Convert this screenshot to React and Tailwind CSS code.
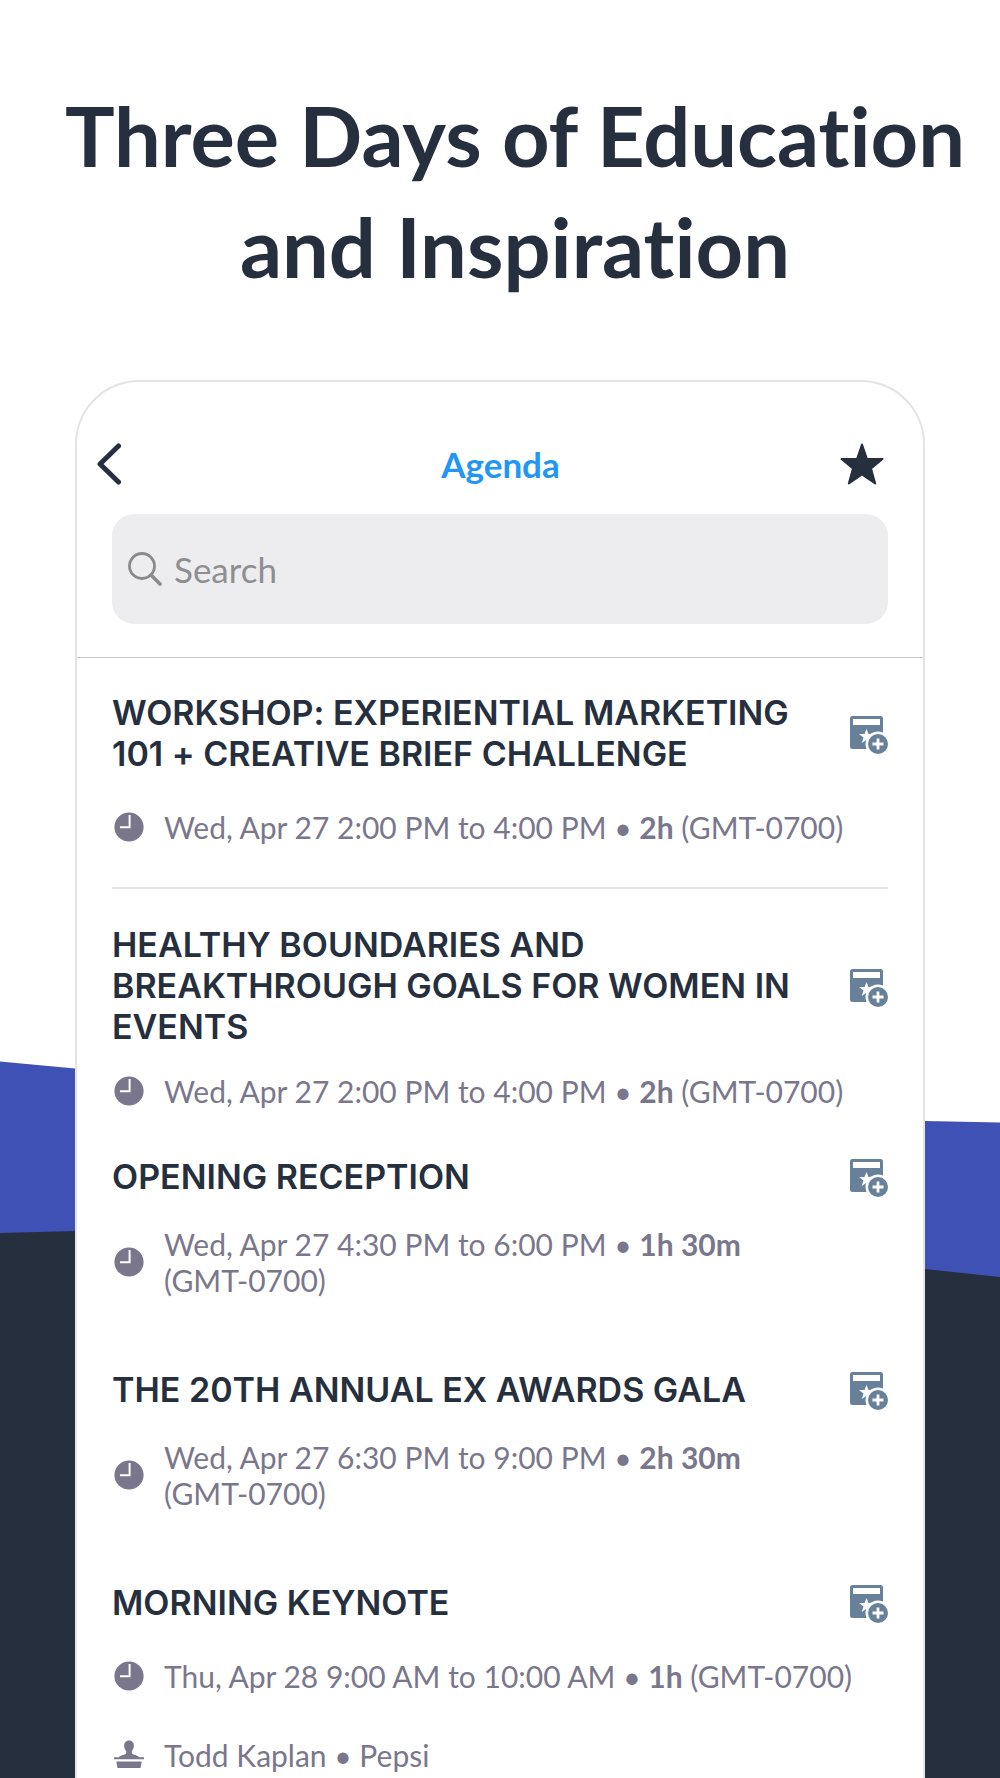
import React from "react";

const sessions = [
  {
    id: 1,
    title: "Workshop: Experiential Marketing 101 + Creative Brief Challenge",
    time: "Wed, Apr 27 2:00 PM to 4:00 PM",
    duration: "2h",
    zone: "(GMT-0700)",
    rowClass: "pt-[34px] pb-[42px] border-b-2 border-[#e4e4e5]",
    metaClass: "mt-[35px]",
  },
  {
    id: 2,
    title: "Healthy Boundaries and Breakthrough Goals for Women in Events",
    time: "Wed, Apr 27 2:00 PM to 4:00 PM",
    duration: "2h",
    zone: "(GMT-0700)",
    rowClass: "pt-[35px] pb-[46px]",
    metaClass: "mt-[26px]",
  },
  {
    id: 3,
    title: "Opening Reception",
    time: "Wed, Apr 27 4:30 PM to 6:00 PM",
    duration: "1h 30m",
    zone: "(GMT-0700)",
    rowClass: "pb-[70px]",
    metaClass: "mt-[29px]",
  },
  {
    id: 4,
    title: "The 20th Annual Ex Awards Gala",
    time: "Wed, Apr 27 6:30 PM to 9:00 PM",
    duration: "2h 30m",
    zone: "(GMT-0700)",
    rowClass: "pb-[70px]",
    metaClass: "mt-[29px]",
  },
  {
    id: 5,
    title: "Morning Keynote",
    time: "Thu, Apr 28 9:00 AM to 10:00 AM",
    duration: "1h",
    zone: "(GMT-0700)",
    speaker: "Todd Kaplan • Pepsi",
    rowClass: "",
    metaClass: "mt-[35px]",
  },
];

const Backdrop = () => (
  <svg
    className="absolute inset-0 w-full h-full"
    viewBox="0 0 1000 1778"
    preserveAspectRatio="none"
    aria-hidden="true"
  >
    <path d="M0 1061.5 L75 1068.5 L500 1112 L925 1121 L1000 1122.5 V1300 H0Z" fill="#4051b5" />
    <path d="M0 1233 L75 1231 L500 1222 L925 1269 L1000 1277 V1778 H0Z" fill="#262f3e" />
  </svg>
);

const ClockIcon = () => (
  <svg className="w-[30px] h-[30px] shrink-0" viewBox="0 0 30 30" aria-hidden="true">
    <circle cx="15" cy="15" r="14.6" fill="#7a778c" />
    <path d="M15.6 3v12.3H6" fill="none" stroke="#fff" strokeWidth="2" />
  </svg>
);

const SpeakerIcon = () => (
  <svg className="w-[30px] h-[30px] shrink-0" viewBox="0 0 30 30" fill="#7a778c" aria-hidden="true">
    <path d="M15 .5c-3 0-4.9 2.2-4.9 5.2 0 2 .9 4 2.1 5.2v2.400c-.5 1.600-6.500 1.800-7.200 4H0v2h30v-2h-5c-.7-2.200-6.700-2.400-7.200-4v-2.400c1.200-1.200 2.100-3.200 2.100-5.200C19.900 2.700 18 .5 15 .5Z" />
    <path d="M2.300 21.500h25.400l-1.200 6.600H3.500Z" />
  </svg>
);

const AddIcon = () => (
  <svg className="w-[38px] h-[38px]" viewBox="0 0 38 38" aria-hidden="true">
    <rect x="0" y="0" width="33" height="33" rx="2.5" fill="#68819b" />
    <rect x="3" y="3" width="27" height="6" fill="#fff" />
    <path
      d="M16.500 13l2 5h5.500l-4.400 3.500 1.700 5.500-4.800-3.200-4.800 3.200 1.800-5.500L9 18h5.500Z"
      fill="#fff"
    />
    <circle cx="28" cy="28" r="12.5" fill="#fff" />
    <circle cx="28" cy="28" r="10" fill="#68819b" />
    <path d="M28 22.500v11M22.500 28h11" stroke="#fff" strokeWidth="2.8" />
  </svg>
);

const Session = ({ session }) => (
  <li className={session.rowClass}>
    <div className="flex items-center justify-between">
      <h2 className="max-w-[700px] font-[Inter,sans-serif] text-[34px] leading-[41px] font-semibold uppercase text-[#262f3e]">
        {session.title}
      </h2>
      <button type="button" className="shrink-0 pt-1" aria-label={`Add ${session.title}`}>
        <AddIcon />
      </button>
    </div>
    <div className={`flex items-center gap-5 pl-0.5 ${session.metaClass}`}>
      <ClockIcon />
      <p className="max-w-[690px]">
        {session.time} • <b>{session.duration}</b>{" "}
        <span className="inline-block">{session.zone}</span>
      </p>
    </div>
    {session.speaker && (
      <div className="flex items-center gap-5 pl-0.5 mt-[43px]">
        <SpeakerIcon />
        <p>{session.speaker}</p>
      </div>
    )}
  </li>
);

const App = () => {
  return (
    <div className="relative flex flex-col min-h-screen overflow-hidden bg-white font-[Lato,sans-serif] [font-variant-ligatures:none]">
      <Backdrop />
      <h1 className="relative pt-20 pl-[30px] text-center text-[83px] leading-[111px] font-bold text-[#262f3e]">
        Three Days of Education
        <br />
        and Inspiration
      </h1>
      <main className="relative flex-1 mt-[78px] mx-[75px] bg-white border-2 border-b-0 border-[#e4e4e5] rounded-t-[64px]">
        <header className="border-b border-[#c8c8ca] pt-[61px] pb-[33px]">
          <div className="grid grid-cols-3 items-center pl-5 pr-[39px]">
            <button type="button" className="justify-self-start" aria-label="Back">
              <svg className="w-[24px] h-[42px]" viewBox="0 0 24 42" aria-hidden="true">
                <path
                  d="M21.500 3L3 21l18.500 18"
                  fill="none"
                  stroke="#262f3e"
                  strokeWidth="5"
                  strokeLinecap="round"
                  strokeLinejoin="round"
                />
              </svg>
            </button>
            <span className="pl-5 text-center text-[35px] leading-[42px] font-bold text-[#2196f3]">
              Agenda
            </span>
            <button type="button" className="justify-self-end" aria-label="Favorites">
              <svg className="w-[44px] h-[42px]" viewBox="0 0 44 42" aria-hidden="true">
                <path
                  d="M22 1.500L27 16H42.500L31 25.500L35.200 40.500L22 31.500L8.800 40.500L13 25.500L1.500 16H17Z"
                  fill="#262f3e"
                  stroke="#262f3e"
                  strokeWidth="2"
                  strokeLinejoin="round"
                />
              </svg>
            </button>
          </div>
          <label className="flex items-center gap-3 h-[110px] mt-[29px] mx-[35px] px-4 rounded-[22px] bg-[#ededef]">
            <svg className="w-[34px] h-[34px] shrink-0" viewBox="0 0 34 34" aria-hidden="true">
              <circle cx="14" cy="14" r="12.5" fill="none" stroke="#8a8a8e" strokeWidth="2.8" />
              <path d="M23 23l9 9" stroke="#8a8a8e" strokeWidth="3.6" strokeLinecap="round" />
            </svg>
            <input
              type="text"
              placeholder="Search"
              aria-label="Search"
              className="w-full bg-transparent outline-none text-[35px] leading-[42px] placeholder:text-[#8e8e93]"
            />
          </label>
        </header>
        <ul className="mx-[35px] text-[30px] leading-9 text-[#7a778c]">
          {sessions.map((session) => (
            <Session key={session.id} session={session} />
          ))}
        </ul>
      </main>
    </div>
  );
};

export default App;
